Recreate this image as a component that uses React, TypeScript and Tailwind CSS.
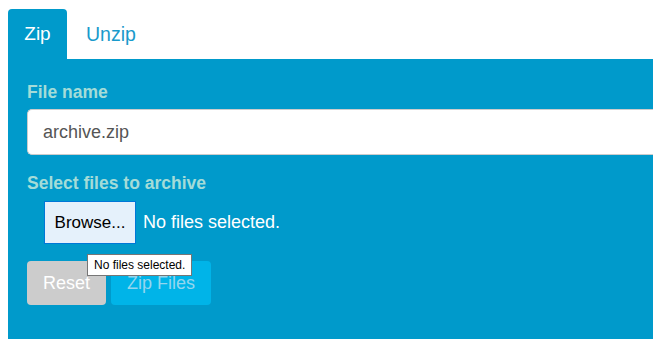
const App = () => {
  return (
    <div className="min-h-[342px] bg-white pt-[9px] pl-[8px] font-['Liberation_Sans',Arial,sans-serif]">
      <div className="flex h-[50px] items-center">
        <div className="flex h-full w-[59px] items-center justify-center rounded-t-[4px] bg-[#009acb] pt-[1px] text-[19px] text-white">
          Zip
        </div>
        <div className="pl-[19px] pt-[1px] text-[19.5px] text-[#1a9acb]">Unzip</div>
      </div>

      <div className="h-[280px] bg-[#009acb] pl-[19px] pt-[24px]">
        <label className="block h-[18px] text-[17.5px] font-bold leading-[18px] text-[#a4dcd8]">File name</label>
        <div className="mt-[8px] flex h-[46px] items-center rounded-l-[5px] border border-r-0 border-[#cccccc] bg-white pl-[15px] text-[18px] text-[#555555]">
          archive.zip
        </div>

        <label className="mt-[19px] block h-[18px] text-[17.5px] font-bold leading-[18px] text-[#a4dcd8]">
          Select files to archive
        </label>
        <div className="relative mt-[9px] ml-[17px] flex items-center">
          <div className="flex h-[43px] w-[92px] items-center justify-center border border-[#0078d7] bg-[#e5f1fb] text-[17px] text-black">
            Browse...
          </div>
          <span className="ml-[7px] text-[18px] text-white">No files selected.</span>
        </div>

        <div className="relative mt-[17px] flex gap-[5px]">
          <button className="h-[44px] w-[79px] rounded-[4px] bg-[#cccccc] text-[18px] text-white">Reset</button>
          <button className="h-[44px] w-[100px] rounded-[4px] bg-[#00b4e8] text-[18px] text-[#94d6ee]">Zip Files</button>
          <div className="absolute left-[60px] top-[-7px] flex h-[22px] items-center border border-[#767676] bg-white px-[6px] text-[12px] text-black">
            No files selected.
          </div>
        </div>
      </div>
    </div>
  );
};

export default App;
